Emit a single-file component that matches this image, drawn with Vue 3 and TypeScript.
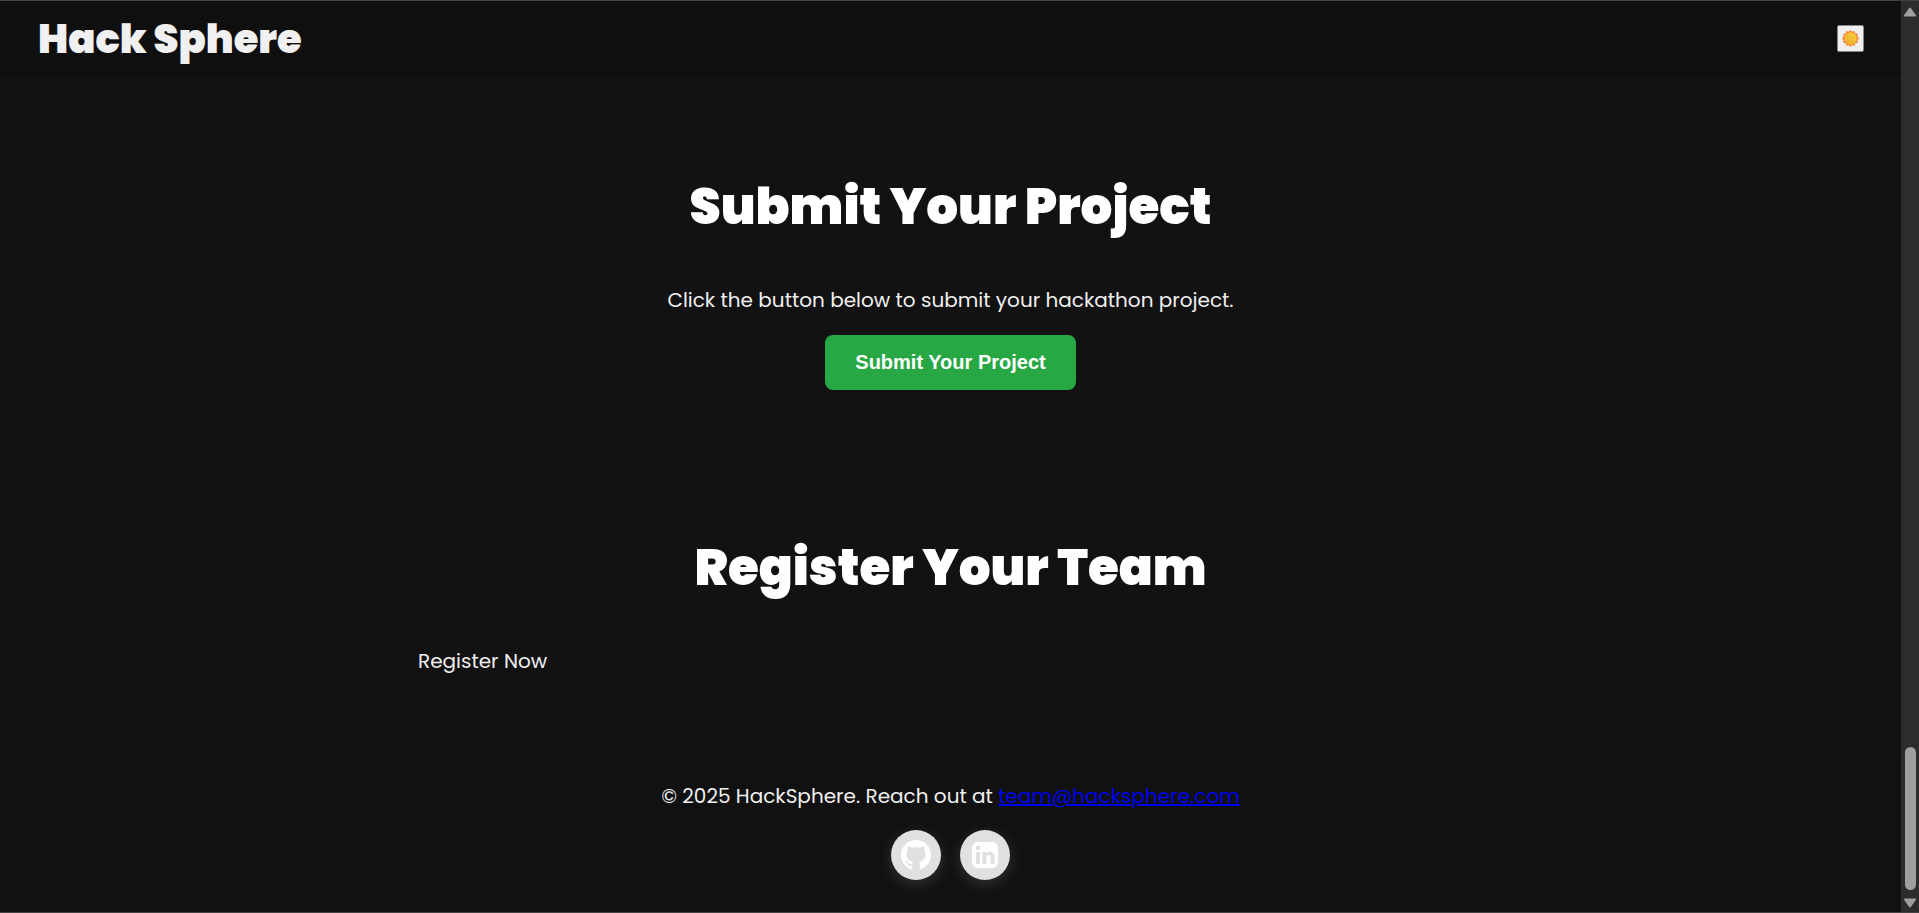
<script setup lang="ts">
import { ref } from 'vue'

const email = 'team@hacksphere.com'
const light = ref(false)
</script>

<template>
  <div class="window">
    <div class="page">
      <header class="bar">
        <a class="logo" href="#">Hack Sphere</a>
        <button class="toggle" type="button" aria-label="Toggle theme" :aria-pressed="light" @click="light = !light">
          <svg viewBox="0 0 16 16" width="17" height="17" aria-hidden="true">
            <defs>
              <linearGradient id="sun" x1="0" y1="1" x2="1" y2="0">
                <stop offset="0" stop-color="#f0a92c" />
                <stop offset="1" stop-color="#f6cf3c" />
              </linearGradient>
            </defs>
            <path fill="#f58238" d="M8 0l1.500 1.700 2.200-.8.700 2.300 2.300.300-.2 2.300L16 8l-1.500 1.700.4 2.300-2.300.500-.8 2.300-2.300-.5L8 16l-1.500-1.700-2.300.5-.8-2.300-2.300-.5.4-2.300L0 8l1.500-2.200-.2-2.300 2.300-.3.700-2.300 2.200.8z" />
            <circle cx="8" cy="8" r="6" fill="url(#sun)" />
          </svg>
        </button>
      </header>

      <main>
        <section class="block centered">
          <h2>Submit Your Project</h2>
          <p>Click the button below to submit your hackathon project.</p>
          <button class="submit" type="button">Submit Your Project</button>
        </section>
        <section class="block">
          <h2>Register Your Team</h2>
          <p>Register Now</p>
        </section>
      </main>

      <footer class="footer">
        <p>© 2025 HackSphere. Reach out at <a :href="'mailto:' + email">{{ email }}</a></p>
        <nav class="social" aria-label="Social links">
          <a href="#github" aria-label="GitHub">
            <svg viewBox="0 0 16 16" width="30" height="30" aria-hidden="true">
              <path fill="#fff" d="M8 0C3.58 0 0 3.58 0 8c0 3.54 2.29 6.53 5.47 7.59.4.07.55-.17.55-.38 0-.19-.01-.82-.01-1.49-2.01.37-2.53-.49-2.69-.94-.09-.23-.48-.94-.82-1.13-.28-.15-.68-.52-.01-.53.63-.01 1.08.58 1.23.82.72 1.21 1.87.87 2.33.66.07-.52.28-.87.51-1.07-1.78-.2-3.64-.89-3.64-3.95 0-.87.31-1.59.82-2.15-.08-.2-.36-1.02.08-2.12 0 0 .67-.21 2.2.82.64-.18 1.32-.27 2-.27s1.36.09 2 .27c1.53-1.04 2.2-.82 2.2-.82.44 1.1.16 1.92.08 2.12.51.56.82 1.27.82 2.15 0 3.07-1.87 3.75-3.65 3.95.29.25.54.73.54 1.48 0 1.07-.01 1.93-.01 2.2 0 .21.15.46.55.38A8.01 8.01 0 0 0 16 8c0-4.42-3.58-8-8-8z" />
            </svg>
          </a>
          <a href="#linkedin" aria-label="LinkedIn">
            <svg viewBox="0 0 26 26" width="26" height="26" aria-hidden="true">
              <rect width="26" height="26" rx="6" fill="#fff" />
              <g fill="#e0e0e0">
                <circle cx="6" cy="6" r="2.3" />
                <path d="M4 10h4v12H4zM10.400 10h3.800v1.700c.7-1.200 2-2 3.800-2 3.500 0 4.600 2.200 4.600 5.500V22h-4v-6c0-1.700-.3-3-1.900-3s-2.300 1.200-2.300 3v6h-4z" />
              </g>
            </svg>
          </a>
        </nav>
      </footer>
    </div>

    <div class="scroll" aria-hidden="true">
      <svg viewBox="0 0 14 10" width="14" height="10"><path d="M7 1.500L12 8.500H2z" fill="#9f9f9f" stroke="#9f9f9f" stroke-width="2" stroke-linejoin="round" /></svg>
      <span class="thumb"></span>
      <svg viewBox="0 0 14 10" width="14" height="10"><path d="M7 8.500L2 1.500h10z" fill="#9f9f9f" stroke="#9f9f9f" stroke-width="2" stroke-linejoin="round" /></svg>
    </div>
  </div>
</template>

<style>
body {
  background: #121212;
}
</style>

<style scoped>
.window {
  display: flex;
  box-sizing: border-box;
  min-height: 100vh;
  border-top: 1px solid #3d444b;
  border-bottom: 1px solid #444;
  background: #121212;
  color: #f0f0f0;
  font: 20px/32px Poppins, Inter, sans-serif;
}

.page {
  display: flex;
  flex: 1;
  flex-direction: column;
}

.bar {
  display: flex;
  align-items: center;
  justify-content: space-between;
  height: 75px;
  padding: 0 37px 0 38px;
  background: #0f0f0f;
}

.logo {
  color: #f0f0f0;
  font-size: 40px;
  font-weight: 900;
  line-height: 60px;
  text-decoration: none;
}

.toggle {
  display: flex;
  align-items: center;
  justify-content: center;
  width: 27px;
  height: 27px;
  padding: 0;
  border: 1px solid #858585;
  border-radius: 2px;
  background: #efefef;
}

main {
  flex: 1;
}

.block {
  max-width: 1065px;
  margin: 0 auto;
  padding: 100px 0 47px;
}

.centered {
  text-align: center;
}

h2 {
  margin: 0 0 46px;
  color: #fff;
  font-size: 50px;
  font-weight: 900;
  line-height: 62px;
  text-align: center;
}

p {
  margin: 0;
}

.submit {
  height: 55px;
  margin-top: 19px;
  padding: 0 30px;
  border: 0;
  border-radius: 8px;
  background: #28a745;
  color: #fff;
  font: bold 20px "Liberation Sans", Arial, sans-serif;
}

.footer {
  padding: 24px 0 32px;
  background: #111;
  text-align: center;
}

.footer p a {
  color: #00e;
}

.social {
  display: flex;
  justify-content: center;
  gap: 19px;
  margin-top: 18px;
}

.social a {
  display: flex;
  align-items: center;
  justify-content: center;
  width: 50px;
  height: 50px;
  border-radius: 50%;
  background: #e0e0e0;
  box-shadow: 0 4px 15px rgba(255, 255, 255, 0.15);
}

.scroll {
  display: flex;
  flex-direction: column;
  align-items: center;
  width: 18px;
  padding: 6px 0 4px;
  box-sizing: border-box;
  background: #2c2c2c;
}

.thumb {
  width: 11px;
  height: 143px;
  margin: auto 0 8px;
  border-radius: 6px;
  background: #9f9f9f;
}
</style>
